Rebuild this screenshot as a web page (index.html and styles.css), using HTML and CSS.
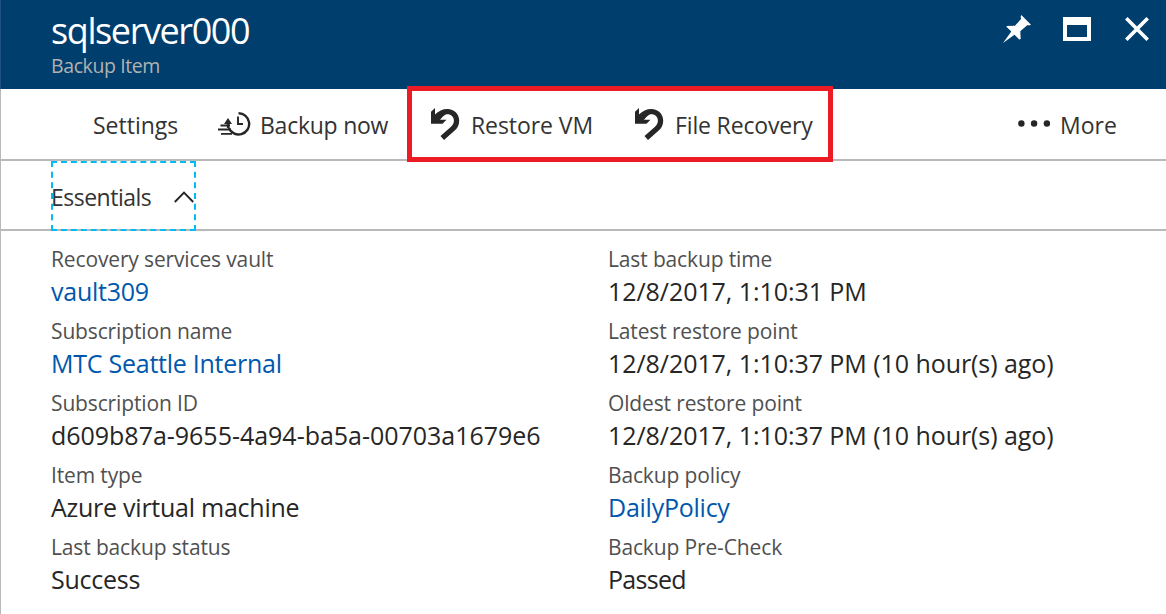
FILE: index.html
```html
<!DOCTYPE html>
<html lang="en">
<head>
<meta charset="utf-8">
<title>sqlserver000 - Backup Item</title>
<link rel="stylesheet" href="styles.css">
</head>
<body>
<main class="blade">
  <header class="blade-header">
    <div class="heading">
      <h1 class="title">sqlserver000</h1>
      <p class="subtitle">Backup Item</p>
    </div>
    <div class="window-actions">
      <svg class="icon-pin" viewBox="0 0 28 28" width="28" height="28" fill="#fff"><path d="M18.3 0 28 9.7 26 10.600 24.500 10 17.300 16.200 17.700 24 16.200 24.400 11.500 19.700 0 28 8.300 16.500 3.400 11.800 3.800 10.900 12 10.800 18.200 3.700 17.600 2Z"/></svg>
      <svg class="icon-window" viewBox="0 0 28 24" width="28" height="24" fill="#fff" fill-rule="evenodd"><path d="M0 0H28V24H0ZM4 8V20H24V8Z"/></svg>
      <svg class="icon-close" viewBox="0 0 24 24" width="24" height="24" fill="none" stroke="#fff" stroke-width="3.6"><path d="M1.300 1.300 22.700 22.700M22.700 1.300 1.300 22.700"/></svg>
    </div>
  </header>

  <nav class="toolbar">
    <a class="command settings">Settings</a>
    <a class="command backup">
      <svg viewBox="0 0 33 24" width="33" height="24" fill="none" stroke="#262626" stroke-width="2.400"><path d="M20.500 1.300A10.600 10.600 0 1 1 10.800 16"/><path d="M20 4.500V12H25" stroke-width="1.900"/><path d="M0 17.500H13M3 21.800H14M2.500 13.500H12" stroke-width="1.800"/><path d="M10 6 14 12H6Z" fill="#262626" stroke="none"/><path d="M10.200 9V16" stroke-width="2.600"/></svg>
      <span>Backup now</span>
    </a>
    <a class="command restore">
      <svg viewBox="0 0 29 32" width="29" height="32"><path d="M0 3.800 4 0V6.500C7.500 3 11.500 1 16.500 1 23 1 28.200 6 28.200 12.500 28.200 16.500 27 19.500 24 22.300L13 32 9.500 28 20 18.700C22 16.800 22.900 15 22.900 12.500 22.900 9 20 6.300 16.500 6.300 13.500 6.300 11.500 9 9 11.800H15.500L11.500 15.800H0Z" fill="#262626"/></svg>
      <span>Restore VM</span>
    </a>
    <a class="command recovery">
      <svg viewBox="0 0 29 32" width="29" height="32"><path d="M0 3.800 4 0V6.500C7.500 3 11.500 1 16.500 1 23 1 28.200 6 28.200 12.500 28.200 16.500 27 19.500 24 22.300L13 32 9.500 28 20 18.700C22 16.800 22.900 15 22.900 12.500 22.900 9 20 6.300 16.500 6.300 13.500 6.300 11.500 9 9 11.800H15.500L11.500 15.800H0Z" fill="#262626"/></svg>
      <span>File Recovery</span>
    </a>
    <a class="command more">
      <svg viewBox="0 0 33 7" width="33" height="7" fill="#262626"><circle cx="3.400" cy="3.500" r="3.200"/><circle cx="16.100" cy="3.500" r="3.200"/><circle cx="28.900" cy="3.500" r="3.200"/></svg>
      <span>More</span>
    </a>
    <div class="highlight"></div>
  </nav>

  <div class="essentials-bar">
    <button class="essentials-toggle">
      <span>Essentials</span>
      <svg viewBox="0 0 20 12" width="20" height="12" fill="none" stroke="#262626" stroke-width="1.900"><path d="M.8 11 10 1.500 19.200 11"/></svg>
    </button>
  </div>

  <section class="properties">
    <dl class="column">
      <div class="property"><dt>Recovery services vault</dt><dd class="link">vault309</dd></div>
      <div class="property"><dt>Subscription name</dt><dd class="link">MTC Seattle Internal</dd></div>
      <div class="property"><dt>Subscription ID</dt><dd class="identifier">d609b87a-9655-4a94-ba5a-00703a1679e6</dd></div>
      <div class="property"><dt>Item type</dt><dd>Azure virtual machine</dd></div>
      <div class="property"><dt>Last backup status</dt><dd>Success</dd></div>
    </dl>
    <dl class="column">
      <div class="property"><dt>Last backup time</dt><dd class="numeric">12/8/2017, 1:10:31 PM</dd></div>
      <div class="property"><dt>Latest restore point</dt><dd class="numeric">12/8/2017, 1:10:37 PM (10 hour(s) ago)</dd></div>
      <div class="property"><dt>Oldest restore point</dt><dd class="numeric">12/8/2017, 1:10:37 PM (10 hour(s) ago)</dd></div>
      <div class="property"><dt>Backup policy</dt><dd class="link">DailyPolicy</dd></div>
      <div class="property"><dt>Backup Pre-Check</dt><dd class="result">Passed</dd></div>
    </dl>
  </section>
</main>
</body>
</html>
```
FILE: styles.css
```css
* { box-sizing: border-box; }
body, h1, p, dl, dd { margin: 0; }
body {
  font-family: "Open Sans", "Noto Sans", sans-serif;
  color: #262626;
  background: #fff;
  overflow: hidden;
}
svg { display: block; flex: none; }

.blade { height: 614px; border-left: 1px solid #b9b9b9; }

.blade-header {
  display: flex;
  justify-content: space-between;
  height: 89px;
  margin-left: -1px;
  padding: 8px 17px 0 50px;
  border-left: 1px solid #1e5280;
  background: #003e6d;
}
.title { font-size: 36px; line-height: 46px; font-weight: 400; color: #fff; letter-spacing: -1.400px; }
.subtitle { font-size: 19.500px; line-height: 23px; color: #b2b2b2; letter-spacing: -.4px; }
.window-actions { display: flex; align-items: flex-start; padding-top: 7px; }
.icon-window { margin: 2px 34px 0 32px; }
.icon-close { margin-top: 2px; }

.toolbar {
  position: relative;
  display: grid;
  grid-template-columns: 125px 213px 204px 383px 1fr;
  height: 72px;
  padding: 2px 0 0 92px;
  border-bottom: 2px solid #b9b9b9;
}
.command { display: flex; align-items: center; font-size: 23px; white-space: nowrap; color: #333; }
.backup { letter-spacing: -.25px; }
.restore { letter-spacing: -.08px; }
.recovery { letter-spacing: -.15px; }
.backup svg { margin-right: 9px; margin-top: -3px; }
.restore svg, .recovery svg { margin-right: 11px; margin-top: -3px; }
.more svg { margin-right: 9px; margin-top: -4px; }
.highlight {
  position: absolute;
  left: 406px;
  top: -3px;
  width: 426px;
  height: 76px;
  border: 5px solid #ed1c24;
}

.essentials-bar { height: 70px; padding-left: 50px; border-bottom: 2px solid #b9b9b9; }
.essentials-toggle {
  display: flex;
  align-items: center;
  justify-content: space-between;
  width: 145px;
  height: 70px;
  padding: 2px 0 0;
  border: 2px dashed #00bcf2;
  background: none;
  color: #333;
  font: 23px "Open Sans", "Noto Sans", sans-serif;
  letter-spacing: -.5px;
}
.essentials-toggle span { margin-left: -2px; }

.properties { display: grid; grid-template-columns: 557px 1fr; padding: 13px 0 0 50px; }
.column { display: grid; gap: 8px; }
dt { font-size: 21px; line-height: 30px; color: #505050; letter-spacing: -.14px; }
dd { font-size: 25px; line-height: 34px; white-space: nowrap; letter-spacing: -.25px; }
.numeric { letter-spacing: -.06px; }
.identifier { letter-spacing: -.02px; }
.result { letter-spacing: -.7px; }
.link { color: #0058ad; }
```
